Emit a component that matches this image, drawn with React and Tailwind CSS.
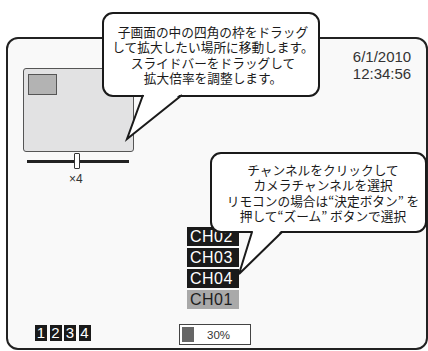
import React from "react";

const jp = { fontFamily: '"Noto Sans CJK JP", "Noto Sans", sans-serif' };
const lat = { fontFamily: '"Liberation Sans", Arial, sans-serif' };

function Bubble1() {
  return (
    <div
      className="absolute left-[102px] top-[12px] z-10 flex h-[85px] w-[218px] flex-col items-center justify-center rounded-[11px] border-2 border-[#1a1a1a] bg-white pl-[4px] text-[12.7px] leading-[15.3px] text-[#1a1a1a]"
      style={jp}
    >
      <div>子画面の中の四角の枠をドラッグ</div>
      <div>して拡大したい場所に移動します。</div>
      <div>スライドバーをドラッグして</div>
      <div>拡大倍率を調整します。</div>
    </div>
  );
}

function Bubble2() {
  return (
    <div
      className="absolute left-[210px] top-[152px] z-10 flex h-[81px] w-[217px] flex-col items-center justify-center rounded-[11px] border-2 border-[#1a1a1a] bg-white pl-[9px] text-[12.7px] leading-[15.3px] text-[#1a1a1a]"
      style={jp}
    >
      <div>チャンネルをクリックして</div>
      <div>カメラチャンネルを選択</div>
      <div className="whitespace-nowrap">リモコンの場合は“決定ボタン” を</div>
      <div className="whitespace-nowrap">押して“ズーム” ボタンで選択</div>
    </div>
  );
}

function Tails() {
  return (
    <svg
      className="pointer-events-none absolute left-0 top-0 z-20"
      width="428"
      height="351"
      viewBox="0 0 428 351"
    >
      <polygon points="144.5,94 127.5,138 180.5,94" fill="#ffffff" />
      <path d="M143,95 L127,139 L182,95" fill="none" stroke="#1a1a1a" strokeWidth="2" strokeLinejoin="miter" />
      <polygon points="253,231 239.5,273 281,231" fill="#ffffff" />
      <path d="M252,232 L239,274 L282,232" fill="none" stroke="#1a1a1a" strokeWidth="2" strokeLinejoin="miter" />
    </svg>
  );
}

function Channel({ label, active }) {
  return (
    <div
      className={
        "flex h-[19px] w-[52px] items-center pl-[3px] text-[16px] leading-[19px] tracking-[0.5px] " +
        (active ? "bg-[#a9a9a9] text-[#1e1e1e]" : "bg-[#1a1a1a] text-white")
      }
      style={lat}
    >
      {label}
    </div>
  );
}

export default function App() {
  return (
    <div className="relative h-[351px] w-[428px] overflow-hidden bg-white">
      <div className="ml-[6px] mt-[37px] flex h-[313px] w-[422px] flex-col rounded-[12px] border-2 border-[#222] bg-[#f9f9f9]">
        {/* top row */}
        <div className="flex items-start">
          <div className="ml-[15px] mt-[29px] flex w-[111px] flex-col">
            <div className="h-[84px] w-[111px] rounded-[3px] border border-[#555] bg-[#e2e2e3] pl-[4px] pt-[5px]">
              <div className="h-[21px] w-[29px] border border-[#555] bg-[#b3b3b3]" />
            </div>
            <div className="relative ml-[4px] mt-[1px] h-[16px] w-[102px]">
              <div className="mt-[7px] h-[3px] w-[102px] bg-[#222]" />
              <div className="absolute left-[47px] top-0 h-[16px] w-[6px] rounded-[1px] border border-[#333] bg-white" />
            </div>
            <div className="ml-[46px] mt-[3px] text-[12px] leading-[14px] text-[#333]" style={lat}>
              ×4
            </div>
          </div>
          <div
            className="ml-auto mr-[9px] mt-[10px] w-[70px] text-center text-[15px] leading-[16.5px] text-[#333]"
            style={lat}
          >
            <div>6/1/2010</div>
            <div>12:34:56</div>
          </div>
        </div>

        {/* channel list */}
        <div className="ml-[179px] mt-[41px] flex flex-col gap-[2px]">
          <Channel label="CH02" />
          <Channel label="CH03" />
          <Channel label="CH04" />
          <Channel label="CH01" active />
        </div>

        {/* bottom row */}
        <div className="mt-[15px] flex items-start">
          <div className="ml-[27px] mt-[1px] flex gap-[2.5px]">
            {["1", "2", "3", "4"].map((n) => (
              <div
                key={n}
                className="flex h-[16px] w-[12px] items-center justify-center bg-[#1a1a1a] text-[15px] leading-[16px] text-white"
                style={lat}
              >
                {n}
              </div>
            ))}
          </div>
          <div className="ml-[88px] flex h-[21px] w-[72px] items-center border border-[#444] bg-white p-[2px]">
            <div className="h-[15px] w-[12px] bg-[#666]" />
            <div className="flex-1 pr-[4px] text-center text-[11.5px] leading-[14px] text-[#333]" style={lat}>
              30%
            </div>
          </div>
        </div>
      </div>

      <Bubble1 />
      <Bubble2 />
      <Tails />
    </div>
  );
}
